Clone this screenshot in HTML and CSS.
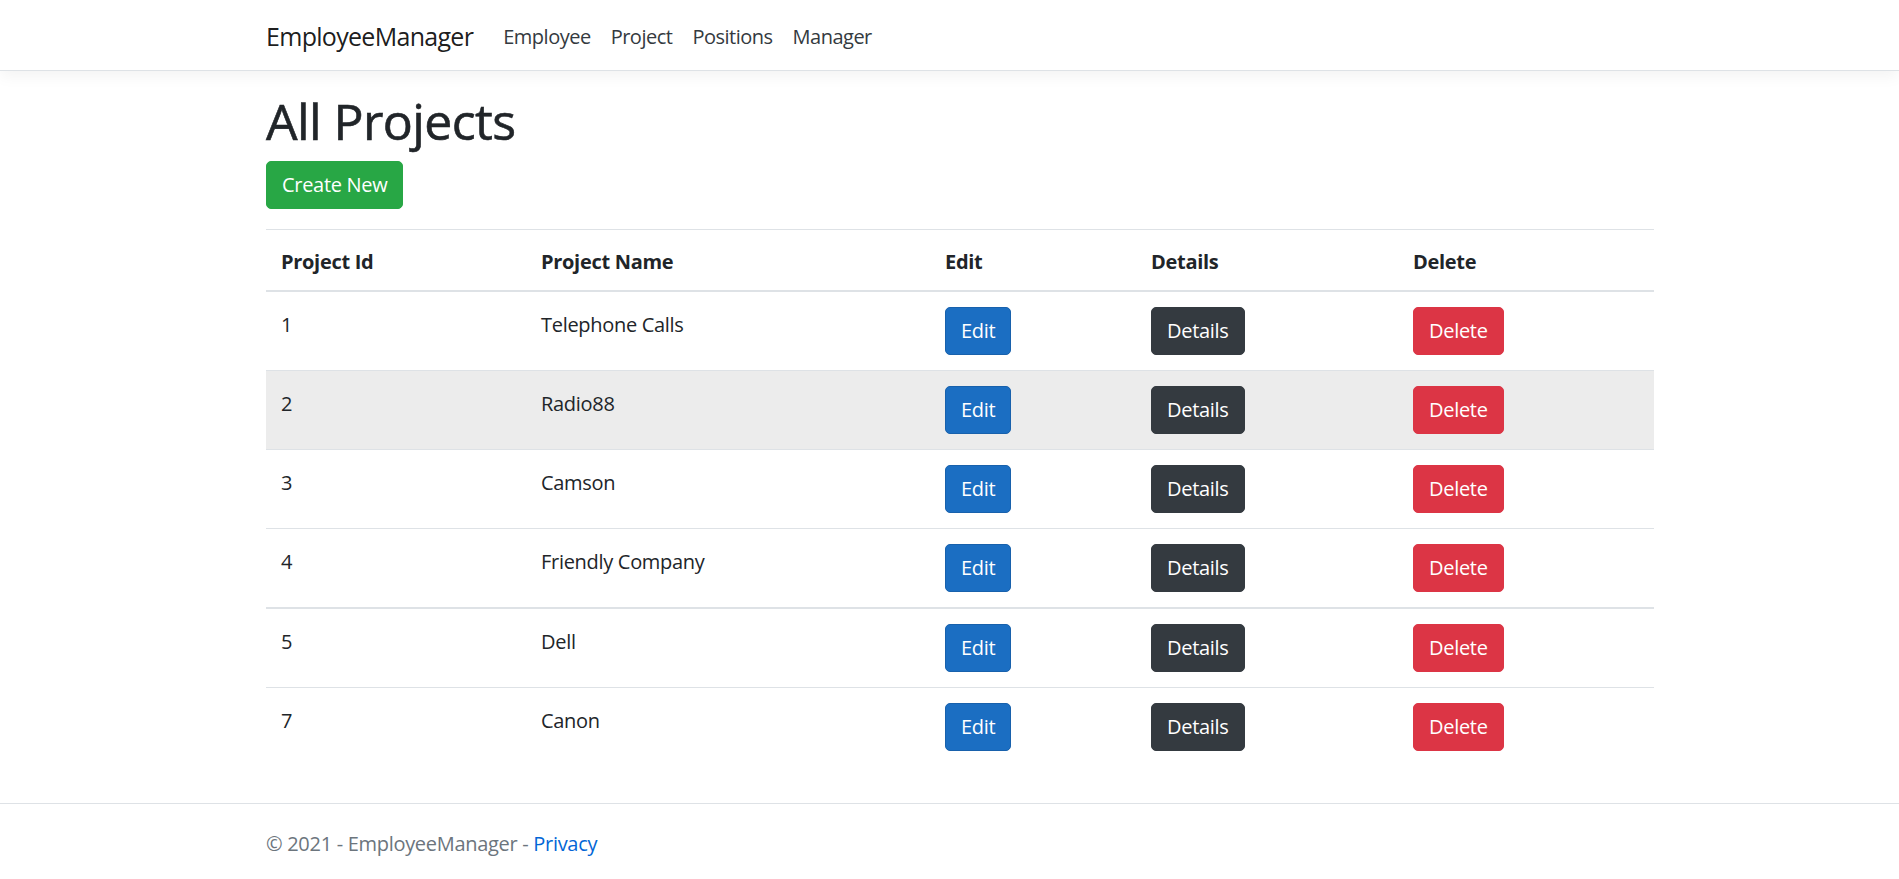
FILE: index.html
```html
<!DOCTYPE html>
<html lang="en">
<head>
<meta charset="utf-8">
<title>All Projects - EmployeeManager</title>
<link rel="stylesheet" href="styles.css">
</head>
<body>
<header class="site-header">
  <nav class="navbar">
    <div class="container nav-inner">
      <a class="brand" href="#">EmployeeManager</a>
      <ul class="nav-links">
        <li><a class="nav-link" href="#">Employee</a></li>
        <li><a class="nav-link" href="#">Project</a></li>
        <li><a class="nav-link" href="#">Positions</a></li>
        <li><a class="nav-link" href="#">Manager</a></li>
      </ul>
    </div>
  </nav>
</header>

<div class="container page">
  <main class="main">
    <h1 class="title">All Projects</h1>
    <p class="actions"><a class="btn btn-success" href="#">Create New</a></p>
    <table class="table">
      <thead>
        <tr>
          <th class="col-id">Project Id</th>
          <th class="col-name">Project Name</th>
          <th class="col-edit">Edit</th>
          <th class="col-details">Details</th>
          <th class="col-delete">Delete</th>
        </tr>
      </thead>
      <tbody>
        <tr>
          <td class="cell-text">1</td><td class="cell-text">Telephone Calls</td>
          <td><a class="btn btn-primary" href="#">Edit</a></td>
          <td><a class="btn btn-dark" href="#">Details</a></td>
          <td><a class="btn btn-danger" href="#">Delete</a></td>
        </tr>
        <tr class="row-hover">
          <td class="cell-text">2</td><td class="cell-text">Radio88</td>
          <td><a class="btn btn-primary" href="#">Edit</a></td>
          <td><a class="btn btn-dark" href="#">Details</a></td>
          <td><a class="btn btn-danger" href="#">Delete</a></td>
        </tr>
        <tr>
          <td class="cell-text">3</td><td class="cell-text">Camson</td>
          <td><a class="btn btn-primary" href="#">Edit</a></td>
          <td><a class="btn btn-dark" href="#">Details</a></td>
          <td><a class="btn btn-danger" href="#">Delete</a></td>
        </tr>
        <tr>
          <td class="cell-text">4</td><td class="cell-text">Friendly Company</td>
          <td><a class="btn btn-primary" href="#">Edit</a></td>
          <td><a class="btn btn-dark" href="#">Details</a></td>
          <td><a class="btn btn-danger" href="#">Delete</a></td>
        </tr>
        <tr class="row-sep">
          <td class="cell-text">5</td><td class="cell-text">Dell</td>
          <td><a class="btn btn-primary" href="#">Edit</a></td>
          <td><a class="btn btn-dark" href="#">Details</a></td>
          <td><a class="btn btn-danger" href="#">Delete</a></td>
        </tr>
        <tr>
          <td class="cell-text">7</td><td class="cell-text">Canon</td>
          <td><a class="btn btn-primary" href="#">Edit</a></td>
          <td><a class="btn btn-dark" href="#">Details</a></td>
          <td><a class="btn btn-danger" href="#">Delete</a></td>
        </tr>
      </tbody>
    </table>
  </main>
</div>

<footer class="footer">
  <div class="container">&copy; 2021 - EmployeeManager - <a class="footer-link" href="#">Privacy</a></div>
</footer>
</body>
</html>
```
FILE: styles.css
```css
* { box-sizing: border-box; }

html, body { height: 100%; }

body {
  margin: 0;
  font-family: "Open Sans", "Noto Sans", sans-serif;
  font-size: 20px;
  line-height: 1.5;
  color: #212529;
  background: #fff;
  display: flex;
  flex-direction: column;
  min-height: 100vh;
  overflow: hidden;
}

.container {
  width: 1388px;
  margin-left: 266px;
}

/* Navbar */
.site-header { position: relative; z-index: 2; }

.navbar {
  background: #fff;
  border-bottom: 1px solid #dee2e6;
  box-shadow: 0 5px 15px rgba(0, 0, 0, 0.05);
  padding: 12px 0 8px;
}

.nav-inner {
  display: flex;
  align-items: center;
}

.brand {
  font-size: 25px;
  line-height: 37.5px;
  padding: 6px 0;
  margin-right: 20px;
  color: rgba(0, 0, 0, 0.9);
  text-decoration: none;
  letter-spacing: -0.7px;
}

.nav-links {
  display: flex;
  list-style: none;
  margin: 0;
  padding: 0;
}

.nav-link {
  display: block;
  padding: 10px 10px;
  line-height: 30px;
  color: #343a40;
  text-decoration: none;
  letter-spacing: -0.5px;
}

/* Main */
.page { flex: 0 0 auto; }

.main { padding-bottom: 14px; }

.title {
  margin: 20px 0 10px;
  font-size: 50px;
  font-weight: 500;
  line-height: 60px;
  letter-spacing: -0.6px;
  -webkit-text-stroke: 0.6px #212529;
}

.actions { margin: 0 0 20px; }

/* Buttons */
.btn {
  display: inline-block;
  padding: 8px 15px;
  font-size: 20px;
  line-height: 30px;
  border: 1px solid transparent;
  border-radius: 5px;
  color: #fff;
  text-decoration: none;
  white-space: nowrap;
  letter-spacing: -0.3px;
}

.btn-success { background: #28a745; border-color: #28a745; }
.btn-primary { background: #1b6ec2; border-color: #1861ac; }
.btn-dark { background: #343a40; border-color: #343a40; }
.btn-danger { background: #dc3545; border-color: #dc3545; }

/* Table */
.table {
  width: 100%;
  border-collapse: collapse;
  margin-bottom: 20px;
}

.table th,
.table td {
  padding: 15px;
  border-top: 1px solid #dee2e6;
  text-align: left;
  vertical-align: top;
}

.table td { letter-spacing: -0.3px; }

.table td.cell-text { padding-top: 18px; }

.table thead th {
  vertical-align: bottom;
  padding: 17px 15px 13px;
  border-bottom: 2px solid #dee2e6;
  font-weight: 700;
  letter-spacing: -0.3px;
}

.row-sep td { border-top: 2px solid #dee2e6; }

.col-id { width: 260px; }
.col-name { width: 404px; }
.col-edit { width: 206px; }
.col-details { width: 262px; }
.col-delete { width: 256px; }

.row-hover td { background: #ececec; }

/* Footer */
.footer {
  margin-top: auto;
  border-top: 1px solid #dee2e6;
  padding-top: 5px;
  line-height: 70px;
  color: #6c757d;
  white-space: nowrap;
  letter-spacing: -0.3px;
}

.footer-link {
  color: #0366d6;
  text-decoration: none;
}
```
